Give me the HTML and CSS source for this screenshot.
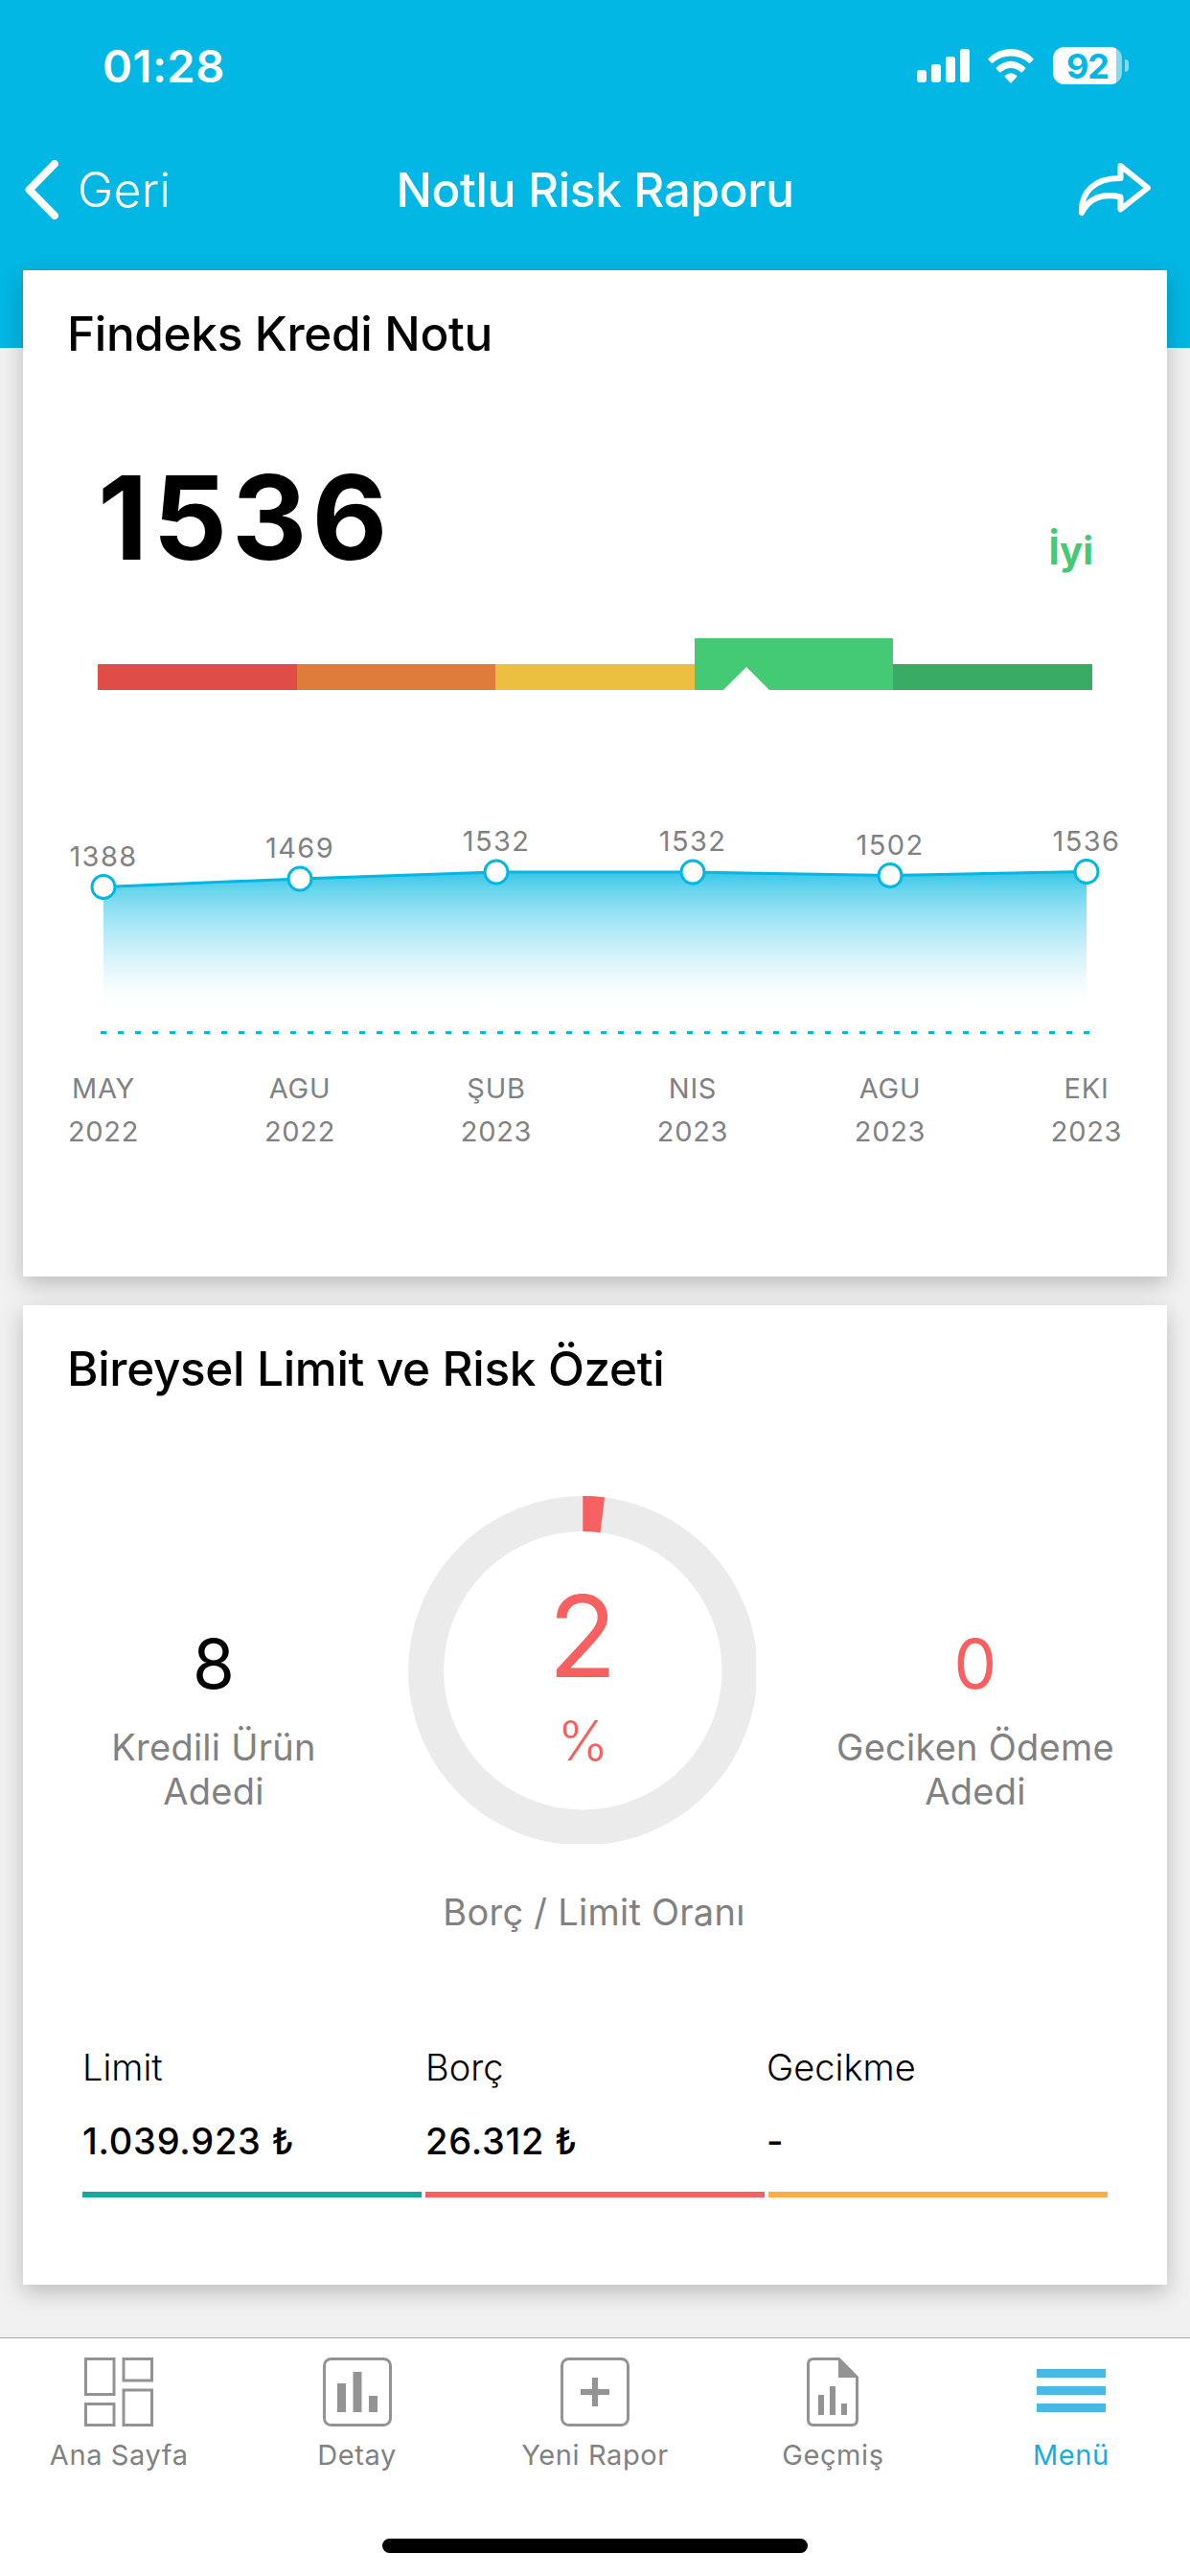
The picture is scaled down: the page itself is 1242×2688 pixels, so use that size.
FILE: index.html
```html
<!DOCTYPE html>
<html lang="tr">
<head>
	<meta charset="utf-8">
	<title>Notlu Risk Raporu</title>
	<link rel="stylesheet" href="styles.css">
</head>
<body>
	<header class="header">
		<div class="status">
			<span class="time">01:28</span>
			<div class="status-icons">
				<svg class="signal" width="55" height="36" viewBox="0 0 55 36" fill="#fff">
					<rect x="0" y="22" width="10" height="13" rx="3"/>
					<rect x="15" y="16" width="10" height="19" rx="3"/>
					<rect x="30" y="8" width="10" height="27" rx="3"/>
					<rect x="45" y="0" width="10" height="35" rx="3"/>
				</svg>
				<svg class="wifi" width="48" height="36" viewBox="0 0 48 36" fill="#fff">
					<path d="M24 36 L18 29.5 Q17.200 28.500 18 27.800 Q24 22.800 30 27.800 Q30.800 28.500 30 29.500 Z"/>
					<path d="M9 19.500 Q24 6 39 19.500 Q39.800 20.300 39 21.100 L36 24.200 Q35.200 24.900 34.400 24.200 Q24 15.700 13.600 24.200 Q12.800 24.900 12 24.200 L9 21.100 Q8.200 20.300 9 19.500 Z"/>
					<path d="M.700 10 Q10.500 0 24 0 Q37.500 0 47.300 10 Q48 10.800 47.300 11.600 L44.300 14.700 Q43.500 15.400 42.700 14.700 Q34.500 7.500 24 7.500 Q13.500 7.500 5.300 14.700 Q4.500 15.400 3.700 14.700 L.700 11.600 Q0 10.800 .700 10 Z"/>
				</svg>
				<div class="battery"><span class="battery-level">92</span></div>
			</div>
		</div>
		<nav class="nav">
			<a class="back" href="#">
				<svg width="36" height="62" viewBox="0 0 36 62" fill="none" stroke="#fff" stroke-width="8" stroke-linecap="round" stroke-linejoin="round">
					<path d="M32 4 L5.500 31 L32 58"/>
				</svg>
				<span>Geri</span>
			</a>
			<h1 class="title">Notlu Risk Raporu</h1>
			<a class="share" href="#">
				<svg width="75" height="56" viewBox="0 0 75 56" fill="none" stroke="#fff" stroke-width="6" stroke-linecap="round" stroke-linejoin="round">
					<path d="M43.500 3 L72 26 L43.500 48.500 V35.500 C25 31.500 11 36 3 52 C2 31 16 15.500 43.500 16 Z"/>
				</svg>
			</a>
		</nav>
	</header>

	<main class="main">
		<section class="card note">
			<h2>Findeks Kredi Notu</h2>
			<div class="score">
				<span class="score-value">1536</span>
				<span class="score-label">İyi</span>
			</div>
			<div class="scale">
				<span class="very-risky"></span>
				<span class="mid-risky"></span>
				<span class="low-risky"></span>
				<span class="good on"><i class="pin" style="left:54px"></i></span>
				<span class="very-good"></span>
			</div>
			<svg class="chart" width="1194" height="500" viewBox="0 0 1194 500">
				<defs>
					<linearGradient id="fade" gradientUnits="userSpaceOnUse" x1="0" y1="190" x2="0" y2="334">
						<stop offset="0" stop-color="#3ac6e8"/>
						<stop offset=".13" stop-color="#68d5ee"/>
						<stop offset=".27" stop-color="#90e0f2"/>
						<stop offset=".42" stop-color="#b1e9f6"/>
						<stop offset=".61" stop-color="#d5f3fb"/>
						<stop offset=".74" stop-color="#eaf9fd"/>
						<stop offset=".88" stop-color="#fafeff"/>
						<stop offset="1" stop-color="#fff"/>
					</linearGradient>
				</defs>
				<path fill="url(#fade)" d="M84 205.500 L289 197 L494 190 L699 190 L905 193.500 L1110 189.500 V340 H84 Z"/>
				<path class="line" d="M84 205.500 L289 197 L494 190 L699 190 L905 193.500 L1110 189.500"/>
				<path class="base" d="M81 357.500 H1113"/>
				<g class="dots">
					<circle cx="84" cy="205.500" r="12"/>
					<circle cx="289" cy="197" r="12"/>
					<circle cx="494" cy="190" r="12"/>
					<circle cx="699" cy="190" r="12"/>
					<circle cx="905" cy="193.500" r="12"/>
					<circle cx="1110" cy="189.500" r="12"/>
				</g>
				<g class="labels values">
					<text x="84" y="184">1388</text>
					<text x="289" y="175">1469</text>
					<text x="494" y="168">1532</text>
					<text x="699" y="168">1532</text>
					<text x="905" y="171.500">1502</text>
					<text x="1110" y="167.500">1536</text>
				</g>
				<g class="labels">
					<text x="84" y="426">MAY</text>
					<text x="289" y="426">AGU</text>
					<text x="494" y="426">ŞUB</text>
					<text x="699" y="426">NIS</text>
					<text x="905" y="426">AGU</text>
					<text x="1110" y="426">EKI</text>

					<text x="84" y="471">2022</text>
					<text x="289" y="471">2022</text>
					<text x="494" y="471">2023</text>
					<text x="699" y="471">2023</text>
					<text x="905" y="471">2023</text>
					<text x="1110" y="471">2023</text>
				</g>
			</svg>
		</section>

		<section class="card limits">
			<h2>Bireysel Limit ve Risk Özeti</h2>
			<div class="summary">
				<div class="stat">
					<strong>8</strong>
					<p>Kredili Ürün<br>Adedi</p>
				</div>
				<div class="ratio">
					<svg class="donut" width="363" height="363" viewBox="0 0 363 363">
						<circle cx="182.300" cy="182.300" r="163.700" fill="none" stroke="#ebebeb" stroke-width="37"/>
						<circle cx="182.300" cy="182.300" r="163.700" fill="none" stroke="#f66060" stroke-width="37" pathLength="100" stroke-dasharray="2 98" transform="rotate(-90 182.300 182.300)"/>
						<text class="ratio-value" x="182" y="189">2</text>
						<text class="ratio-unit" x="182.500" y="275.500">%</text>
					</svg>
					<p>Borç / Limit Oranı</p>
				</div>
				<div class="stat late">
					<strong>0</strong>
					<p>Geciken Ödeme<br>Adedi</p>
				</div>
			</div>
			<div class="totals">
				<div class="total limit">
					<span>Limit</span>
					<b>1.039.923 ₺</b>
				</div>
				<div class="total debt">
					<span>Borç</span>
					<b>26.312 ₺</b>
				</div>
				<div class="total delay">
					<span>Gecikme</span>
					<b>-</b>
				</div>
			</div>
		</section>
	</main>

	<footer class="footer">
		<div class="tabs">
			<a class="tab" href="#">
				<svg width="72" height="72" viewBox="0 0 72 72" fill="none" stroke="#939393" stroke-width="3">
					<rect x="1.500" y="1.500" width="29.500" height="37"/>
					<rect x="41" y="1.500" width="29.500" height="22.500"/>
					<rect x="1.500" y="48.500" width="29.500" height="22"/>
					<rect x="41" y="34" width="29.500" height="36.500"/>
				</svg>
				<span>Ana Sayfa</span>
			</a>
			<a class="tab" href="#">
				<svg width="72" height="72" viewBox="0 0 72 72" fill="#939393">
					<rect x="1.500" y="1.500" width="69" height="69" rx="7" fill="none" stroke="#939393" stroke-width="3"/>
					<path d="M15 27 h9 v30 h-9 Z M31.500 15 h9 v42 h-9 Z M48 40 h9 v17 h-9 Z"/>
				</svg>
				<span>Detay</span>
			</a>
			<a class="tab" href="#">
				<svg width="72" height="72" viewBox="0 0 72 72" fill="#939393">
					<rect x="1.500" y="1.500" width="69" height="69" rx="7" fill="none" stroke="#939393" stroke-width="3"/>
					<path d="M33 21 h6 v12 h12 v6 h-12 v12 h-6 v-12 h-12 v-6 h12 Z"/>
				</svg>
				<span>Yeni Rapor</span>
			</a>
			<a class="tab" href="#">
				<svg width="54" height="72" viewBox="0 0 54 72" fill="#939393">
					<path d="M33.500 1.500 H7 Q1.500 1.500 1.500 7 V65 Q1.500 70.500 7 70.500 H47 Q52.500 70.500 52.500 65 V20.500 Z" fill="none" stroke="#939393" stroke-width="3"/>
					<path d="M33 0 L54 21 H33 Z M12 39 h6 v21 h-6 Z M24 30 h6 v30 h-6 Z M36 48 h6 v12 h-6 Z"/>
				</svg>
				<span>Geçmiş</span>
			</a>
			<a class="tab on" href="#">
				<svg width="72" height="72" viewBox="0 0 72 72" fill="#48b8e4">
					<path d="M0 12 h72 v9 h-72 Z M0 30 h72 v9 h-72 Z M0 48 h72 v9 h-72 Z"/>
				</svg>
				<span>Menü</span>
			</a>
		</div>
		<div class="home-bar"></div>
	</footer>
</body>
</html>
```

FILE: styles.css
```css
*{
	margin: 0;
	padding: 0;
	box-sizing: border-box;
	text-decoration: none;
}
body{
	display: flex;
	flex-direction: column;
	width: 1242px;
	height: 2688px;
	overflow: hidden;
	background: #f1f1f1;
	color: #000;
	font-family: Inter, "Liberation Sans", sans-serif;
}
svg{
	display: block;
	flex: none;
}

/* header */
.header{
	height: 363px;
	flex: none;
	background: #02b7e3;
	color: #fff;
}
.status{
	display: flex;
	justify-content: space-between;
	align-items: center;
	height: 137px;
	padding: 0 64px 0 107px;
}
.time{
	font-size: 47px;
	font-weight: 600;
	letter-spacing: 0.5px;
}
.status-icons{
	display: flex;
	align-items: center;
}
.wifi{
	margin: 0 20px 0 19px;
}
.battery{
	display: flex;
	align-items: center;
}
.battery-level{
	width: 72px;
	height: 39px;
	border-radius: 12px;
	background: linear-gradient(90deg, #fff 66px, rgba(255,255,255,.5) 66px);
	color: #02b7e3;
	font-size: 36px;
	font-weight: 700;
	line-height: 40px;
	text-align: center;
	letter-spacing: -1px;
}
.battery:after{
	content: "";
	width: 4px;
	height: 13px;
	margin-left: 3px;
	border-radius: 0 4px 4px 0;
	background: rgba(255,255,255,.5);
}
.nav{
	display: grid;
	grid-template-columns: 300px 1fr 300px;
	align-items: center;
	height: 122px;
	padding: 0 41px 0 25px;
}
.nav a{
	color: #fff;
}
.back{
	display: flex;
	align-items: center;
	gap: 20px;
	font-size: 50px;
	font-weight: 300;
	letter-spacing: 0.3px;
}
.title{
	font-size: 49.5px;
	font-weight: 500;
	text-align: center;
	white-space: nowrap;
	letter-spacing: -0.35px;
	padding-left: 16px;
}
.share{
	justify-self: end;
}

/* cards */
.main{
	display: flex;
	flex-direction: column;
	gap: 30px;
	margin-top: -81px;
	padding: 0 24px;
}
.card{
	background: #fff;
	box-shadow: 0 8px 22px rgba(0,0,0,.22);
}
.note{
	height: 1050px;
}
.limits{
	height: 1022px;
}
.card h2{
	padding-left: 46px;
	font-size: 49.5px;
	font-weight: 500;
	line-height: 132px;
	letter-spacing: -0.35px;
}
.score{
	display: flex;
	justify-content: space-between;
	align-items: flex-end;
	height: 186px;
	padding: 0 77px 0 78px;
}
.score-value{
	font-size: 121.5px;
	font-weight: 700;
	line-height: 120px;
	letter-spacing: 5px;
}
.score-label{
	color: #44c975;
	font-size: 40px;
	font-weight: 700;
	line-height: 50px;
}
.scale{
	display: flex;
	align-items: flex-end;
	height: 120px;
	padding: 0 78px;
}
.scale span{
	position: relative;
	flex: 1;
	height: 27px;
}
.scale .on{
	height: 54px;
}
.very-risky{
	background: #e04d46;
}
.mid-risky{
	background: #df7c3b;
}
.low-risky{
	background: #ecbf41;
}
.good{
	background: #44c975;
}
.very-good{
	background: #39ab64;
}
.pin{
	position: absolute;
	bottom: 0;
	margin-left: -24px;
	border: solid transparent;
	border-width: 0 24px 24px;
	border-bottom-color: #fff;
}
.line{
	fill: none;
	stroke: #02b7e3;
	stroke-width: 3;
}
.base{
	stroke: #02b7e3;
	stroke-width: 3;
	stroke-dasharray: 6 12;
}
.dots{
	fill: #fff;
	stroke: #02b7e3;
	stroke-width: 3;
}
.labels{
	fill: #818181;
	font-size: 29px;
	letter-spacing: 0.7px;
	text-anchor: middle;
}
.values{
	letter-spacing: 1.4px;
}

/* limit and debt summary */
.summary{
	display: grid;
	grid-template-columns: 398px 396px 400px;
	text-align: center;
	color: #818181;
	font-size: 38px;
	line-height: 46px;
	letter-spacing: 0.25px;
}
.stat{
	padding-top: 201.5px;
}
.stat strong{
	display: block;
	margin-bottom: 24.5px;
	color: #000;
	font-size: 71px;
	font-weight: 400;
	line-height: 80px;
}
.late strong{
	color: #f66060;
}
.ratio{
	padding-top: 67px;
}
.donut{
	margin: 0 0 48px 4px;
}
.donut text{
	fill: #f66060;
	text-anchor: middle;
}
.ratio-value{
	font-size: 118px;
}
.ratio-unit{
	font-size: 57px;
	font-weight: 300;
}
.totals{
	display: grid;
	grid-template-columns: repeat(3, 354px);
	gap: 4px;
	margin-top: 116px;
	padding-left: 62px;
	font-size: 38px;
	line-height: 46px;
}
.total{
	border-bottom: 6px solid;
	padding-bottom: 30px;
}
.total span,
.total b{
	display: block;
	color: #000;
}
.total span{
	margin-bottom: 31px;
	font-weight: 300;
}
.total b{
	font-weight: 500;
	letter-spacing: 0.75px;
}
.limit{
	border-color: #1aa79d;
}
.debt{
	border-color: #f66060;
}
.delay{
	border-color: #fdae42;
}
.delay span,
.delay b{
	margin-left: -2px;
}

/* bottom tabs */
.footer{
	height: 249px;
	margin-top: auto;
	flex: none;
	border-top: 1px solid #a3a3a3;
	background: #fff;
}
.tabs{
	display: flex;
	height: 209px;
	padding-top: 20px;
}
.tab{
	display: flex;
	flex: 1;
	flex-direction: column;
	align-items: center;
	gap: 12px;
	color: #818181;
	font-size: 29px;
	line-height: 36px;
	letter-spacing: 0.6px;
}
.tab.on{
	color: #14aee5;
}
.home-bar{
	width: 444px;
	height: 15px;
	margin: 0 auto;
	border-radius: 8px;
	background: #000;
}
```
